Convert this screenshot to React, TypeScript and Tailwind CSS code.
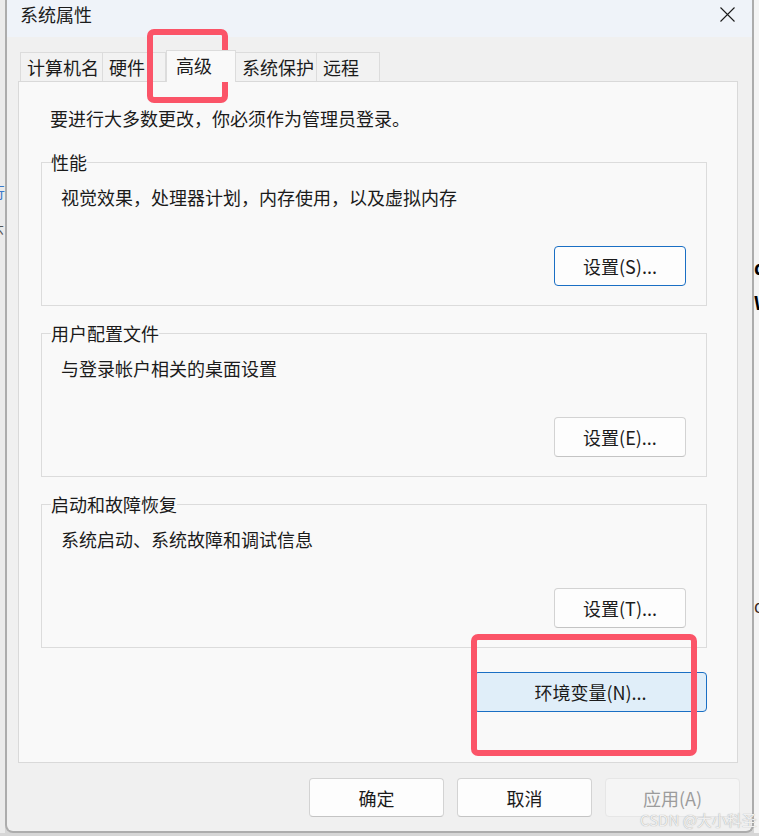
import React from 'react';

interface TabItem {
    label: string;
    width: string;
    active?: boolean;
}

const tabs: TabItem[] = [
    { label: '计算机名', width: 'w-[83px]' },
    { label: '硬件', width: 'w-[64px]' },
    { label: '高级', width: 'w-[70px]', active: true },
    { label: '系统保护', width: 'w-[82px]' },
    { label: '远程', width: 'w-[64px]' },
];

const groups = [
    { title: '性能', desc: '视觉效果，处理器计划，内存使用，以及虚拟内存', button: '设置(S)...', focused: true },
    { title: '用户配置文件', desc: '与登录帐户相关的桌面设置', button: '设置(E)...' },
    { title: '启动和故障恢复', desc: '系统启动、系统故障和调试信息', button: '设置(T)...' },
];

const CloseIcon = () => (
    <svg width="15" height="15" viewBox="0 0 15 15" className="mt-[5px]">
        <path d="M0.5 0.5 L14.5 14.5 M14.5 0.5 L0.5 14.5" stroke="#1b1b1b" strokeWidth="1.1" fill="none" />
    </svg>
);

const GroupBox = ({ title, desc, button, focused, first }: { title: string; desc: string; button: string; focused?: boolean; first?: boolean }) => (
    <fieldset className={`border border-[#dcdcdc] ${first ? 'mt-[20px]' : 'mt-[15px]'}`}>
        <legend className="ml-[9px] px-0 leading-[24px]">{title}</legend>
        <div className="flex flex-col pl-[19px] pr-[20px] pt-[11px] pb-[19px]">
            <div className="leading-[24px]">{desc}</div>
            <button
                type="button"
                className={`mt-[37px] flex h-[40px] w-[132px] items-center justify-center self-end rounded-[4px] border bg-[#fdfdfd] ${focused ? 'border-[#1a6fc4]' : 'border-[#d3d3d3] border-b-[#c4c4c4]'}`}
            >
                {button}
            </button>
        </div>
    </fieldset>
);

export default function App() {
    return (
        <div className="relative h-[836px] w-[759px] overflow-hidden bg-[#d6d6d6] font-['Noto_Sans_CJK_SC',sans-serif] text-[18px] leading-[24px] text-[#1b1b1b]">
            <div className="flex h-[833px]">
                {/* window behind, left edge */}
                <div className="relative w-[5px] shrink-0 overflow-hidden bg-[#ebebeb]">
                    <span className="absolute left-[-10px] top-[180px] text-[15px] text-[#3a78c9]">行</span>
                    <span className="absolute left-[-11px] top-[220px] text-[15px] text-[#555]">环</span>
                </div>

                <div className="flex w-[749px] shrink-0 flex-col overflow-hidden rounded-b-[8px] border-x-2 border-b-2 border-[#acacac] bg-[#f0f0f0]">
                    {/* title bar */}
                    <div className="flex h-[37px] items-start justify-between bg-[#eff3f9] pl-[13px] pr-[17px] pt-[2px]">
                        <span>系统属性</span>
                        <CloseIcon />
                    </div>

                    {/* tabs */}
                    <div className="flex h-[44px] items-end pl-[13px]">
                        {tabs.map((t) =>
                            t.active ? (
                                <div
                                    key={t.label}
                                    className={`relative z-10 -mb-px flex h-[32px] items-center border border-b-0 border-[#dcdcdc] bg-[#f9f9f9] pb-[4px] pl-[9px] ${t.width}`}
                                >
                                    {t.label}
                                </div>
                            ) : (
                                <div
                                    key={t.label}
                                    className={`-ml-px flex h-[29px] items-center border border-b-0 border-[#dcdcdc] bg-[#f2f2f2] pb-[1px] pl-[6px] first:ml-0 ${t.width}`}
                                >
                                    {t.label}
                                </div>
                            )
                        )}
                    </div>

                    {/* tab page */}
                    <div className="ml-[11px] mr-[14px] flex h-[682px] flex-col border border-[#d9d9d9] bg-[#f9f9f9] pl-[22px] pr-[30px] pt-[24px]">
                        <div className="ml-[9px]">要进行大多数更改，你必须作为管理员登录。</div>
                        {groups.map((g, i) => (
                            <GroupBox key={g.title} {...g} first={i === 0} />
                        ))}
                        <button
                            type="button"
                            className="mt-[24px] flex h-[40px] w-[233px] items-center justify-center self-end rounded-[4px] border border-[#1a6fc4] bg-[#e0eef9]"
                        >
                            环境变量(N)...
                        </button>
                    </div>

                    {/* dialog buttons */}
                    <div className="flex justify-end gap-[13px] pr-[12px] pt-[15px]">
                        <button type="button" className="flex h-[39px] w-[135px] items-center justify-center rounded-[4px] border border-[#d3d3d3] border-b-[#c4c4c4] bg-[#fdfdfd]">
                            确定
                        </button>
                        <button type="button" className="flex h-[39px] w-[135px] items-center justify-center rounded-[4px] border border-[#d3d3d3] border-b-[#c4c4c4] bg-[#fdfdfd]">
                            取消
                        </button>
                        <button type="button" disabled className="flex h-[39px] w-[135px] items-center justify-center rounded-[4px] border border-[#e6e6e6] bg-[#f5f5f5] text-[#9c9c9c]">
                            应用(A)
                        </button>
                    </div>
                </div>

                {/* window behind, right edge */}
                <div className="relative flex-1 overflow-hidden bg-[#f4f4f4]">
                    <span className="absolute left-0 top-[255px] text-[19px] font-bold text-black">d</span>
                    <span className="absolute left-0 top-[290px] text-[19px] font-bold text-black">W</span>
                    <span className="absolute left-0 top-[594px] text-[17px] text-[#3a2a20]">d</span>
                </div>
            </div>

            {/* annotations */}
            <div className="pointer-events-none absolute left-[147px] top-[29px] h-[74px] w-[81px] rounded-[7px] border-[6px] border-[#fb5468]" />
            <div className="pointer-events-none absolute left-[471px] top-[634px] h-[122px] w-[226px] rounded-[7px] border-[6px] border-[#fb5468]" />

            <div className="pointer-events-none absolute left-[640px] top-[810px] text-[15px] leading-[20px] text-[#f0f0f0] [text-shadow:0_0_1px_rgba(110,110,110,0.7)]">
                CSDN @大小科圣
            </div>
        </div>
    );
}
